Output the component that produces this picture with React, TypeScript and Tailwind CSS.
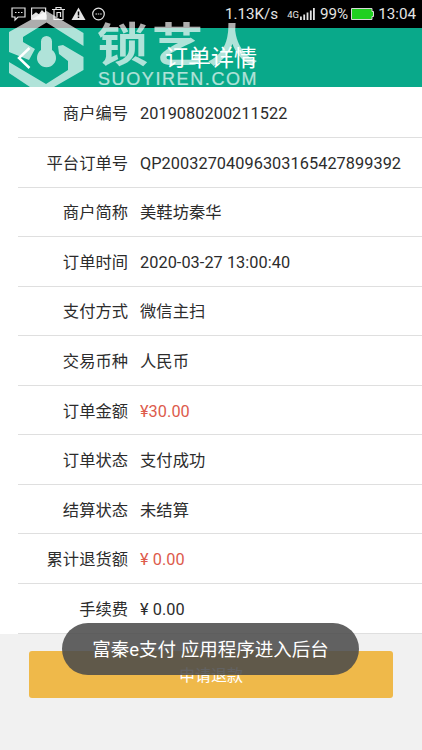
import { clsx } from 'clsx';

const rows = [
  { label: '商户编号', value: '2019080200211522' },
  { label: '平台订单号', value: 'QP20032704096303165427899392' },
  { label: '商户简称', value: '美鞋坊秦华' },
  { label: '订单时间', value: '2020-03-27 13:00:40' },
  { label: '支付方式', value: '微信主扫' },
  { label: '交易币种', value: '人民币' },
  { label: '订单金额', value: '¥30.00', red: true },
  { label: '订单状态', value: '支付成功' },
  { label: '结算状态', value: '未结算' },
  { label: '累计退货额', value: '¥ 0.00', red: true },
  { label: '手续费', value: '¥ 0.00' },
];

function StatusBar() {
  return (
    <div className="flex h-7 items-center bg-black pl-[11px] pr-[6px] text-[#e4e4e4]">
      <svg width="96" height="16" viewBox="0 0 96 16" fill="none" stroke="currentColor" strokeWidth="1.2">
        <path d="M1 2h13v9H7l-3 3v-3H1z" />
        <path d="M4 6.5h1.5M7 6.5h1.5M10 6.5h1.5" />
        <path d="M20.600 2h14v11h-14z" />
        <path d="M21 13v-3l4-3 3 2 3-4 4 4v4z" fill="currentColor" />
        <path d="M41 3.500h13M45 3V1.500h5V3M43 4v9.500h9V4M46 11V6.500h3.500V11" />
        <path d="M67.500 1.500l7 12.500h-14z" fill="currentColor" stroke="none" />
        <path d="M67.500 5.500v4M67.500 10.500v1.600" stroke="#000" strokeWidth="1.500" />
        <circle cx="87.500" cy="8" r="5.800" />
        <path d="M84.500 8H86M86.800 8h1.500M89.200 8h1.500" />
      </svg>
      <div className="ml-auto flex items-center">
        <span className="mr-[9px] text-[15.2px]">1.13K/s</span>
        <span className="mt-[2px] text-[9.500px]">4G</span>
        <svg className="ml-px" width="15" height="12" viewBox="0 0 15 12" fill="currentColor">
          <path d="M0 8.500h1.800V12H0zM3.300 6.500h1.800V12H3.300zM6.600 4.500h1.800V12H6.600zM9.900 2.500h1.800V12H9.900zM13 0h1.800v12H13z" />
        </svg>
        <span className="ml-[5px] text-[15.2px]">99%</span>
        <svg className="ml-[3px]" width="23" height="12" viewBox="0 0 23 12">
          <path d="M.5.5h20.500v3h1.500v5H21v3H.5z" fill="#1fd01f" stroke="#d8d8d8" />
        </svg>
        <span className="ml-[4px] text-[15.2px]">13:04</span>
      </div>
    </div>
  );
}

function Watermark() {
  return (
    <div className="absolute left-0 top-0 h-[88px] w-[270px] overflow-hidden text-white opacity-68">
      <svg className="absolute left-0 top-0" width="92" height="87" viewBox="0 0 92 87" fill="currentColor">
        <path d="M46.500 11L83.500 33v13L46.500 22.500 23 37v5l12 7-6 11L9 52V32z" />
        <path d="M9 62l37 22 22-14v-9l-9-7-1-8 5-1 20.500 12v13L54 87H30L9 73z" />
        <path d="M46.500 36a5.500 5.500 0 0 1 5.500 5.500V50a9.500 9.500 0 1 1-11 0v-8.500a5.500 5.500 0 0 1 5.500-5.500z" />
      </svg>
      <div className="absolute left-[97px] top-[19px] origin-top scale-y-90 whitespace-nowrap font-['Noto_Sans_CJK_SC',sans-serif] text-[51px] font-bold leading-[50px] tracking-[4px]">
        锁艺人
      </div>
      <div className="absolute left-[98px] top-[71px] font-['Liberation_Sans',sans-serif] text-[18px] leading-[17px] tracking-[1.6px] [-webkit-text-stroke:0.2px_white]">
        SUOYIREN.COM
      </div>
    </div>
  );
}

export default function App() {
  return (
    <div className="relative flex h-[750px] w-[422px] flex-col overflow-hidden bg-[#f1f1f1] font-[Roboto,'Noto_Sans_CJK_SC',sans-serif]">
      <StatusBar />
      <header className="relative flex h-[59px] items-center justify-center bg-[#09a98a] text-white">
        <svg className="absolute left-[17px] top-[19px]" width="14" height="22" viewBox="0 0 14 22" fill="none" stroke="currentColor" strokeWidth="2.500">
          <path d="M12.500 1L2 11l10.500 10" />
        </svg>
        <h1 className="pt-[3px] text-[23px]">订单详情</h1>
      </header>

      <main className="bg-white pl-[18px] pt-[1.5px]">
        {rows.map((row) => (
          <div key={row.label} className="flex h-[49.56px] items-center border-b border-[#dfdfdf] pt-[3.5px] text-[16.3px] text-[#2c2c2c]">
            <span className="w-[110px] text-right">{row.label}</span>
            <span className={clsx('ml-3 whitespace-nowrap tracking-[0.06px]', row.red && 'text-[#dd5b4c]')}>{row.value}</span>
          </div>
        ))}
      </main>

      <button className="mx-[29px] mt-[17.5px] h-[47px] rounded-[3px] bg-[#efb94a] pt-[2px] text-[16px] text-white">申请退款</button>

      <Watermark />
      <div className="absolute left-[62px] top-[623px] flex h-[52px] w-[297px] items-center justify-center rounded-full bg-[#4b4b4b]/87 pt-[4px] text-[18.500px] text-white">
        富秦e支付 应用程序进入后台
      </div>
    </div>
  );
}
